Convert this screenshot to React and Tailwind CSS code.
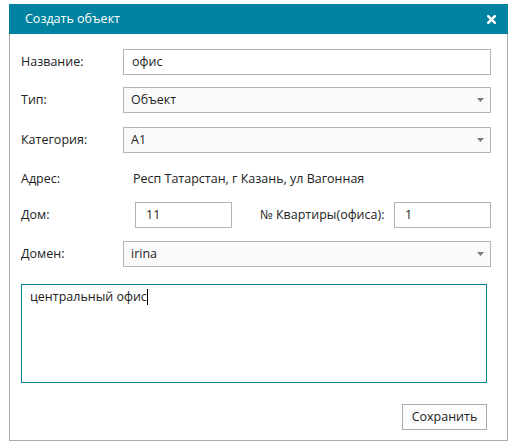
import React from "react";

// small helpers
const Label = ({ children, className = "" }) => (
  <div className={`w-[102px] shrink-0 text-[12.5px] text-[#222] ${className}`}>{children}</div>
);

const TextBox = ({ value, className = "" }) => (
  <div className={`h-[26px] border border-[#b4b4b4] bg-white pl-[8px] flex items-center text-[12.5px] text-[#222] ${className}`}>
    {value}
  </div>
);

const Combo = ({ value }) => (
  <div className="flex-1 h-[26px] border border-[#b4b4b4] bg-[#fafafa] pl-[7px] pr-[6px] flex items-center justify-between text-[12.5px] text-[#222]">
    <span>{value}</span>
    <svg width="7" height="4" viewBox="0 0 7 4">
      <path d="M0 0 H7 L3.5 4 Z" fill="#7a7a7a" />
    </svg>
  </div>
);

export default function App() {
  return (
    <div className="w-[516px] h-[447px] bg-white pt-[4px] pl-[9px]" style={{ fontFamily: '"Open Sans", "Noto Sans", sans-serif' }}>
      <div className="w-[499px] h-[437px] border border-[#ababab] border-t-0 flex flex-col">
        {/* header */}
        <div className="h-[30px] -mx-px bg-[#0083a0] flex items-center justify-between pl-[16px] pr-[12px]">
          <span className="text-[12.5px] text-white">Создать объект</span>
          <svg width="9" height="9" viewBox="0 0 9 9">
            <path d="M1.3 1.3 L7.7 7.7 M7.7 1.3 L1.3 7.7" stroke="#fff" strokeWidth="2.6" strokeLinecap="square" />
          </svg>
        </div>

        <div className="flex flex-col pl-[11px] pr-[16px] pt-[15px]">
          <div className="flex items-center">
            <Label>Название:</Label>
            <TextBox value="офис" className="flex-1" />
          </div>

          <div className="flex items-center mt-[12px]">
            <Label>Тип:</Label>
            <Combo value="Объект" />
          </div>

          <div className="flex items-center mt-[14px]">
            <Label>Категория:</Label>
            <Combo value="A1" />
          </div>

          <div className="flex items-center h-[26px] mt-[13px]">
            <Label className="w-[112px]">Адрес:</Label>
            <span className="text-[12.5px] text-[#222]">Респ Татарстан, г Казань, ул Вагонная</span>
          </div>

          <div className="flex items-center mt-[10px]">
            <Label className="w-[114px]">Дом:</Label>
            <TextBox value="11" className="w-[97px] pl-[10px]" />
            <span className="ml-[28px] text-[12.5px] text-[#222]">№ Квартиры(офиса):</span>
            <TextBox value="1" className="ml-auto w-[97px] pl-[10px]" />
          </div>

          <div className="flex items-center mt-[13px]">
            <Label>Домен:</Label>
            <Combo value="irina" />
          </div>

          <div className="mt-[17px] mr-[4px] h-[99px] border border-[#0083a0] px-[8px] pt-[3px] text-[12.5px] text-[#222]">
            центральный офис<span className="inline-block w-px h-[16px] bg-black align-middle -mt-[2px]" />
          </div>

          <div className="flex justify-end mt-[21px] mr-[4px]">
            <button className="h-[26px] w-[85px] border border-[#ababab] bg-[#fdfdfd] text-[12.5px] text-[#222]">
              Сохранить
            </button>
          </div>
        </div>
      </div>
    </div>
  );
}
